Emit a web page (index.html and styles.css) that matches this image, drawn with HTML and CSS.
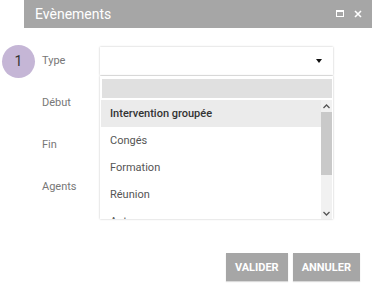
FILE: index.html
```html
<!DOCTYPE html>
<html lang="fr">
<head>
  <meta charset="UTF-8" />
  <title>Evènements</title>
  <link rel="stylesheet" href="styles.css">
</head>
<body>

  <div class="window-bar">
    <span class="window-title">Evènements</span>
    <div class="window-actions">
      <svg class="win-icon" width="8" height="7" viewBox="0 0 8 7">
        <rect x="0.5" y="0.5" width="7" height="6" fill="none" stroke="#fff" stroke-width="1"/>
        <rect x="0.5" y="0.5" width="7" height="1.5" fill="#fff"/>
      </svg>
      <svg class="win-icon" width="8" height="8" viewBox="0 0 8 8">
        <path d="M1 1 L7 7 M7 1 L1 7" stroke="#fff" stroke-width="1.6"/>
      </svg>
    </div>
  </div>

  <div class="form">
    <div class="form-row">
      <div class="step"><span class="step-badge">1</span></div>
      <span class="form-label">Type</span>
      <div class="field">
        <div class="select">
          <span class="caret"></span>
        </div>
        <div class="dropdown">
          <div class="dropdown-filter"></div>
          <div class="dropdown-body">
            <ul class="options">
              <li class="option active">Intervention groupée</li>
              <li class="option">Congés</li>
              <li class="option">Formation</li>
              <li class="option">Réunion</li>
              <li class="option">Autre</li>
            </ul>
            <div class="scrollbar">
              <span class="scroll-btn">
                <svg width="7" height="5" viewBox="0 0 7 5"><path d="M0.5 4 L3.5 1 L6.5 4" fill="none" stroke="#555" stroke-width="1.3"/></svg>
              </span>
              <span class="scroll-thumb"></span>
              <span class="scroll-track"></span>
              <span class="scroll-btn">
                <svg width="7" height="5" viewBox="0 0 7 5"><path d="M0.5 1 L3.5 4 L6.5 1" fill="none" stroke="#555" stroke-width="1.3"/></svg>
              </span>
            </div>
          </div>
        </div>
      </div>
    </div>
    <div class="form-row">
      <div class="step"></div>
      <span class="form-label">Début</span>
      <div class="field"></div>
    </div>
    <div class="form-row">
      <div class="step"></div>
      <span class="form-label">Fin</span>
      <div class="field"></div>
    </div>
    <div class="form-row">
      <div class="step"></div>
      <span class="form-label">Agents</span>
      <div class="field"></div>
    </div>
  </div>

  <div class="buttons">
    <button class="btn">VALIDER</button>
    <button class="btn">ANNULER</button>
  </div>

</body>
</html>
```

FILE: styles.css
```css
body {
  margin: 0;
  width: 372px;
  height: 284px;
  overflow: hidden;
  background: #ffffff;
  font-family: 'Roboto', 'Liberation Sans', sans-serif;
  color: #555;
}

.window-bar {
  margin-left: 24px;
  height: 28px;
  background: #a6a6a6;
  display: flex;
  align-items: center;
  justify-content: space-between;
  padding: 0 10px 0 11px;
}

.window-title {
  color: #ffffff;
  font-size: 14px;
}

.window-actions {
  display: flex;
  align-items: center;
  gap: 10px;
  margin-top: -1px;
}

.win-icon {
  display: block;
}

.form {
  display: flex;
  flex-direction: column;
  gap: 14px;
  padding-top: 19px;
}

.form-row {
  display: grid;
  grid-template-columns: 42px 58px 233px;
  align-items: center;
  height: 28px;
}

.step {
  height: 28px;
  display: flex;
  align-items: center;
}

.step-badge {
  width: 33px;
  height: 33px;
  margin-left: 2px;
  border-radius: 50%;
  background: #c5b6d6;
  color: #333;
  font-size: 14px;
  display: flex;
  align-items: center;
  justify-content: center;
}

.form-label {
  font-size: 11px;
  color: #777;
  margin-top: -1px;
}

.field {
  position: relative;
  height: 28px;
}

.select {
  height: 28px;
  background: #fff;
  box-shadow: 0 0 2px rgba(0, 0, 0, 0.25);
  position: relative;
}

.caret {
  position: absolute;
  right: 11px;
  top: 12px;
  width: 0;
  height: 0;
  border-left: 3px solid transparent;
  border-right: 3px solid transparent;
  border-top: 4px solid #111;
}

.dropdown {
  position: absolute;
  top: 29px;
  left: 0;
  width: 233px;
  height: 143px;
  background: #fff;
  box-shadow: 0 0 2px rgba(0, 0, 0, 0.25);
  z-index: 5;
  display: flex;
  flex-direction: column;
  overflow: hidden;
}

.dropdown-filter {
  margin: 3px 1px 2px 2px;
  height: 19px;
  background: #e0e0e0;
}

.dropdown-body {
  flex: 1;
  display: flex;
  overflow: hidden;
  margin-left: 1px;
}

.options {
  list-style: none;
  margin: 0;
  padding: 0;
  flex: 1;
}

.option {
  height: 27px;
  line-height: 27px;
  padding-left: 9px;
  font-size: 11px;
  color: #555;
}

.option.active {
  background: #ebebeb;
  color: #333;
  font-weight: 500;
}

.scrollbar {
  width: 11px;
  margin-right: 1px;
  background: #f1f1f1;
  display: flex;
  flex-direction: column;
}

.scroll-btn {
  height: 12px;
  display: flex;
  align-items: center;
  justify-content: center;
}

.scroll-thumb {
  height: 63px;
  background: #c9c9c9;
}

.scroll-track {
  flex: 1;
}

.buttons {
  display: flex;
  justify-content: flex-end;
  gap: 5px;
  padding-right: 12px;
  margin-top: 52px;
}

.btn {
  height: 28px;
  border: none;
  background: #a6a6a6;
  color: #fff;
  font-family: 'Roboto', 'Liberation Sans', sans-serif;
  font-weight: bold;
  font-size: 11px;
  padding: 0 9px;
  box-shadow: 0 1px 1px rgba(0, 0, 0, 0.15);
}
```
